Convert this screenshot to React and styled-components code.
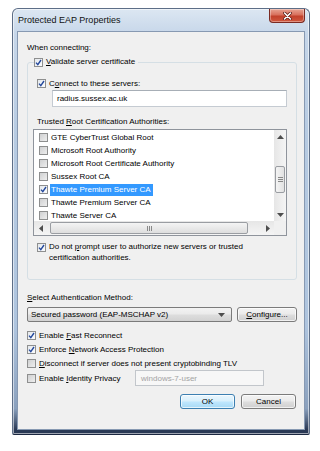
import React from 'react';
import styled, { createGlobalStyle } from 'styled-components';

const GlobalStyle = createGlobalStyle`
  html, body {
    margin: 0;
    background: #fff;
  }
  body {
    font-family: "Liberation Sans", Arial, sans-serif;
    font-size: 8px;
    color: #000;
  }
`;

const Page = styled.div`
  width: 320px;
  height: 451px;
  box-sizing: border-box;
  padding: 8px 0 0 12px;
`;

const Window = styled.div`
  width: 298px;
  height: 427px;
  box-sizing: border-box;
  display: flex;
  flex-direction: column;
  padding: 0 4px 4px 4px;
  border: 1px solid #5d6e87;
  border-bottom-color: #1b2740;
  border-radius: 6px 6px 2px 2px;
  background: linear-gradient(180deg, #dce7f2 0%, #c6d6e9 6%, #b7cbe2 30%, #aec4de 75%, #8aa0bd 94%, #2a3955 99%);
  box-shadow: inset 0 0 0 1px rgba(255, 255, 255, 0.55);
`;

const TitleBar = styled.div`
  height: 22px;
  display: flex;
  justify-content: space-between;
  align-items: flex-start;
`;

const Title = styled.div`
  font-size: 9px;
  line-height: 22px;
  padding-left: 1px;
  color: #111;
`;

const CloseButton = styled.div`
  width: 36px;
  height: 14px;
  box-sizing: border-box;
  display: flex;
  align-items: center;
  justify-content: center;
  border: 1px solid #7a2a22;
  border-top: none;
  border-radius: 0 0 4px 4px;
  background: linear-gradient(180deg, #e8a493 0%, #d8705c 45%, #c2412b 55%, #d0583f 100%);
  box-shadow: inset 0 0 0 1px rgba(255, 255, 255, 0.35);
`;

const Client = styled.div`
  flex: 1;
  box-sizing: border-box;
  display: flex;
  flex-direction: column;
  padding: 10px 7px 0 9px;
  background: #f0f0f0;
  border: 1px solid #8799b2;
`;

const Label = styled.div`
  line-height: 12px;
  margin-top: ${(p) => p.$mt || 0}px;
  margin-left: ${(p) => p.$ml || 0}px;
  white-space: nowrap;
`;

const Group = styled.fieldset`
  margin: 2px 0 0 0;
  padding: 0 9px 15px 5px;
  border: 1px solid #d5dfe5;
  border-radius: 3px;
  min-width: 0;
`;

const Legend = styled.legend`
  margin-left: 1px;
  padding: 0 3px 0 0;
  display: flex;
  align-items: center;
  gap: 3px;
  line-height: 12px;
`;

const CheckRow = styled.div`
  display: flex;
  align-items: ${(p) => (p.$top ? 'flex-start' : 'center')};
  gap: 3px;
  height: ${(p) => p.$h || 14}px;
  margin-top: ${(p) => p.$mt || 0}px;
  margin-left: ${(p) => p.$ml || 0}px;
  white-space: nowrap;
`;

const Box = styled.span`
  width: 9px;
  height: 9px;
  flex-shrink: 0;
  box-sizing: border-box;
  display: inline-flex;
  align-items: center;
  justify-content: center;
  border: 1px solid #8e8f8f;
  background: ${(p) =>
    p.$checked
      ? 'linear-gradient(135deg, #e4e8ec 0%, #fbfcfd 100%)'
      : 'linear-gradient(135deg, #cfd0d1 0%, #eeeeee 100%)'};
  margin-top: ${(p) => (p.$top ? 2 : 0)}px;
`;

const Mn = styled.span`
  text-decoration: underline;
  text-underline-offset: 1px;
`;

const TextInput = styled.div`
  height: 17px;
  box-sizing: border-box;
  margin: 1px 0 0 19px;
  padding-left: 4px;
  display: flex;
  align-items: center;
  background: #fff;
  border: 1px solid #c5cbd2;
  border-top-color: #a7aeb6;
`;

const ListBox = styled.div`
  height: 107px;
  margin-top: 1px;
  box-sizing: border-box;
  display: grid;
  grid-template-columns: 1fr 12px;
  grid-template-rows: 1fr 14px;
  background: #fff;
  border: 1px solid #8f949c;
  overflow: hidden;
`;

const Items = styled.div`
  padding: 1px 0 0 5px;
  overflow: hidden;
`;

const Item = styled.div`
  height: 13px;
  display: flex;
  align-items: center;
  gap: 2px;
  white-space: nowrap;
`;

const ItemText = styled.span`
  padding: 0 2px 0 1px;
  line-height: 12px;
  background: ${(p) => (p.$selected ? '#3399ff' : 'transparent')};
  color: ${(p) => (p.$selected ? '#fff' : '#000')};
`;

const VScroll = styled.div`
  display: flex;
  flex-direction: column;
  align-items: center;
  background: linear-gradient(90deg, #e6e6e6, #f5f5f5);
`;

const Arrow = styled.div`
  width: ${(p) => (p.$horizontal ? 13 : 12)}px;
  height: ${(p) => (p.$horizontal ? 14 : 13)}px;
  flex-shrink: 0;
  display: flex;
  align-items: center;
  justify-content: center;
`;

const VThumb = styled.div`
  width: 10px;
  height: 27px;
  margin-top: ${(p) => p.$offset}px;
  box-sizing: border-box;
  display: flex;
  align-items: center;
  justify-content: center;
  border: 1px solid #9a9da2;
  border-radius: 2px;
  background: linear-gradient(90deg, #f4f4f4, #e2e2e2);
`;

const HScroll = styled.div`
  display: flex;
  align-items: center;
  background: linear-gradient(180deg, #e6e6e6, #f5f5f5);
`;

const HThumb = styled.div`
  width: ${(p) => p.$width}px;
  height: 12px;
  margin-left: ${(p) => p.$offset}px;
  box-sizing: border-box;
  display: flex;
  align-items: center;
  justify-content: center;
  border: 1px solid #9a9da2;
  border-radius: 2px;
  background: linear-gradient(180deg, #f4f4f4, #dedede);
  color: #777;
  font-size: 6px;
  letter-spacing: -0.5px;
`;

const Corner = styled.div`
  background: #f0f0f0;
`;

const Para = styled.div`
  line-height: 11px;
`;

const ControlRow = styled.div`
  display: flex;
  align-items: center;
  gap: ${(p) => p.$gap || 0}px;
  margin-top: ${(p) => p.$mt || 0}px;
  justify-content: ${(p) => (p.$end ? 'flex-end' : 'flex-start')};
  padding-right: ${(p) => (p.$end ? 1 : 0)}px;
`;

const Combo = styled.div`
  width: 205px;
  height: 15px;
  box-sizing: border-box;
  display: flex;
  align-items: center;
  justify-content: space-between;
  padding: 0 6px 0 3px;
  border: 1px solid #7b7b7b;
  border-radius: 2px;
  background: linear-gradient(180deg, #f3f3f3 0%, #ebebeb 45%, #dddddd 55%, #d2d2d2 100%);
`;

const Button = styled.div`
  width: ${(p) => p.$w}px;
  height: 15px;
  box-sizing: border-box;
  display: flex;
  align-items: center;
  justify-content: center;
  border: 1px solid ${(p) => (p.$focus ? '#3c7fb1' : '#7b7b7b')};
  border-radius: 3px;
  background: ${(p) =>
    p.$focus
      ? 'linear-gradient(180deg, #eaf6fd 0%, #d9f0fc 45%, #bee6fd 55%, #a7d9f5 100%)'
      : 'linear-gradient(180deg, #f3f3f3 0%, #ebebeb 45%, #dddddd 55%, #cfcfcf 100%)'};
  box-shadow: inset 0 0 0 1px rgba(255, 255, 255, 0.7);
`;

const IdLabel = styled.div`
  display: flex;
  align-items: center;
  gap: 3px;
  width: 108px;
  flex-shrink: 0;
  white-space: nowrap;
`;

const DisabledInput = styled.div`
  width: 129px;
  height: 16px;
  box-sizing: border-box;
  display: flex;
  align-items: center;
  padding-left: 5px;
  color: #a3a3a3;
  background: #f7f7f7;
  border: 1px solid #c2c6cb;
`;

const Tick = () => (
  <svg width="7" height="7" viewBox="0 0 7 7">
    <path d="M1 3.6 L2.8 5.6 L6 1" fill="none" stroke="#24489c" strokeWidth="1.4" />
  </svg>
);

const Check = ({ checked, top }) => (
  <Box $checked={checked} $top={top}>
    {checked && <Tick />}
  </Box>
);

const Tri = ({ dir }) => {
  const pts = {
    up: '0,4 3.5,0 7,4',
    down: '0,0 3.5,4 7,0',
    left: '4,0 0,3.5 4,7',
    right: '0,0 4,3.5 0,7',
  }[dir];
  const vertical = dir === 'up' || dir === 'down';
  return (
    <svg width={vertical ? 7 : 4} height={vertical ? 4 : 7} viewBox={vertical ? '0 0 7 4' : '0 0 4 7'}>
      <polygon points={pts} fill="#4d4d4d" />
    </svg>
  );
};

const authorities = [
  { name: 'GTE CyberTrust Global Root' },
  { name: 'Microsoft Root Authority' },
  { name: 'Microsoft Root Certificate Authority' },
  { name: 'Sussex Root CA' },
  { name: 'Thawte Premium Server CA', checked: true, selected: true },
  { name: 'Thawte Premium Server CA' },
  { name: 'Thawte Server CA' },
];

export default function App() {
  return (
    <Page>
      <GlobalStyle />
      <Window>
        <TitleBar>
          <Title>Protected EAP Properties</Title>
          <CloseButton>
            <svg width="9" height="8" viewBox="0 0 9 8">
              <path d="M1.5 1 L7.5 7 M7.5 1 L1.5 7" stroke="#5a1a12" strokeWidth="3" strokeLinecap="round" />
              <path d="M1.5 1 L7.5 7 M7.5 1 L1.5 7" stroke="#fff" strokeWidth="1.6" strokeLinecap="round" />
            </svg>
          </CloseButton>
        </TitleBar>
        <Client>
          <Label>When connecting:</Label>
          <Group>
            <Legend>
              <Check checked />
              <span>
                <Mn>V</Mn>alidate server certificate
              </span>
            </Legend>
            <CheckRow $h={12} $mt={9} $ml={4}>
              <Check checked />
              <span>
                C<Mn>o</Mn>nnect to these servers:
              </span>
            </CheckRow>
            <TextInput>radius.sussex.ac.uk</TextInput>
            <Label $mt={9} $ml={4}>
              Trusted <Mn>R</Mn>oot Certification Authorities:
            </Label>
            <ListBox>
              <Items>
                {authorities.map((a, i) => (
                  <Item key={i}>
                    <Check checked={a.checked} />
                    <ItemText $selected={a.selected}>{a.name}</ItemText>
                  </Item>
                ))}
              </Items>
              <VScroll>
                <Arrow>
                  <Tri dir="up" />
                </Arrow>
                <VThumb $offset={23}>
                  <svg width="5" height="5" viewBox="0 0 5 5">
                    <path d="M0 0.5 H5 M0 2.5 H5 M0 4.5 H5" stroke="#888" strokeWidth="1" />
                  </svg>
                </VThumb>
                <div style={{ flex: 1 }} />
                <Arrow>
                  <Tri dir="down" />
                </Arrow>
              </VScroll>
              <HScroll>
                <Arrow $horizontal>
                  <Tri dir="left" />
                </Arrow>
                <HThumb $offset={3} $width={198}>
                  <svg width="5" height="5" viewBox="0 0 5 5">
                    <path d="M0.5 0 V5 M2.5 0 V5 M4.5 0 V5" stroke="#888" strokeWidth="1" />
                  </svg>
                </HThumb>
                <div style={{ flex: 1 }} />
                <Arrow $horizontal>
                  <Tri dir="right" />
                </Arrow>
              </HScroll>
              <Corner />
            </ListBox>
            <CheckRow $top $h={23} $mt={5} $ml={4}>
              <Check checked top />
              <Para>
                Do not <Mn>p</Mn>rompt user to authorize new servers or trusted
                <br />
                certification authorities.
              </Para>
            </CheckRow>
          </Group>
          <Label $mt={12}>
            <Mn>S</Mn>elect Authentication Method:
          </Label>
          <ControlRow $gap={5} $mt={3}>
            <Combo>
              <span>Secured password (EAP-MSCHAP v2)</span>
              <Tri dir="down" />
            </Combo>
            <Button $w={60}>
              <span>
                <Mn>C</Mn>onfigure...
              </span>
            </Button>
          </ControlRow>
          <CheckRow $mt={6}>
            <Check checked />
            <span>
              Enable <Mn>F</Mn>ast Reconnect
            </span>
          </CheckRow>
          <CheckRow>
            <Check checked />
            <span>
              Enforce <Mn>N</Mn>etwork Access Protection
            </span>
          </CheckRow>
          <CheckRow>
            <Check />
            <span>
              <Mn>D</Mn>isconnect if server does not present cryptobinding TLV
            </span>
          </CheckRow>
          <ControlRow>
            <IdLabel>
              <Check />
              <span>
                Enable <Mn>I</Mn>dentity Privacy
              </span>
            </IdLabel>
            <DisabledInput>windows-7-user</DisabledInput>
          </ControlRow>
          <ControlRow $end $gap={6} $mt={8}>
            <Button $w={55} $focus>
              OK
            </Button>
            <Button $w={55}>Cancel</Button>
          </ControlRow>
        </Client>
      </Window>
    </Page>
  );
}
